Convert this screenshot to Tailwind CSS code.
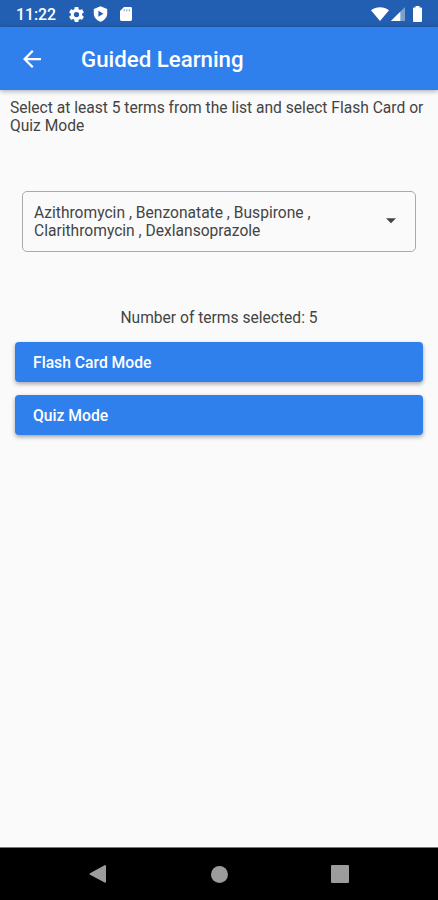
<!DOCTYPE html>
<html lang="en">
<head>
<meta charset="utf-8">
<title>Guided Learning</title>
<script src="https://cdn.jsdelivr.net/npm/@tailwindcss/browser@4"></script>
</head>
<body class="bg-[#fafafa] font-['Roboto',sans-serif] text-[#444]">
<div class="flex h-[900px] w-[438px] flex-col overflow-hidden">
  <div class="flex h-[27px] shrink-0 items-center bg-[#225fb2] pl-4 text-white">
    <span class="w-[52px] pt-[2px] text-[15.800px] leading-none font-medium whitespace-nowrap">11:22</span>
    <svg class="mt-[1px] ml-[1px] h-[15px] w-[15px]" viewBox="2 2 20 20" fill="currentColor"><path d="M19.43 12.98c.04-.32.07-.64.07-.98s-.03-.66-.07-.98l2.11-1.65c.19-.15.24-.42.12-.64l-2-3.46c-.12-.22-.39-.3-.61-.22l-2.49 1c-.52-.4-1.08-.73-1.69-.98l-.38-2.65C14.46 2.18 14.25 2 14 2h-4c-.25 0-.46.18-.49.42l-.38 2.65c-.61.25-1.17.59-1.69.98l-2.49-1c-.23-.09-.49 0-.61.22l-2 3.46c-.13.22-.07.49.12.64l2.11 1.65c-.04.32-.07.65-.07.98s.03.66.07.98l-2.11 1.65c-.19.15-.24.42-.12.64l2 3.46c.12.22.39.3.61.22l2.49-1c.52.4 1.08.73 1.69.98l.38 2.65c.03.24.24.42.49.42h4c.25 0 .46-.18.49-.42l.38-2.65c.61-.25 1.17-.59 1.69-.98l2.49 1c.23.09.49 0 .61-.22l2-3.46c.12-.22.07-.49-.12-.64l-2.11-1.65zM12 15.5A3.5 3.5 0 1 1 12 8.500a3.500 3.500 0 0 1 0 7z"/></svg>
    <svg class="mt-[1px] ml-[9px] h-4 w-[15px]" viewBox="0 0 15 16"><path d="M7.500.2 14.200 3v4.500c0 3.800-2.800 7-6.700 8.200C3.600 14.500.8 11.300.8 7.500V3z" fill="currentColor"/><path d="M5.400 4.800v6l5-3z" fill="#225fb2"/></svg>
    <svg class="mt-[1px] ml-[12px] h-[14px] w-3" viewBox="0 0 12 14"><path d="M4 0h6.600Q12 0 12 1.400v11.200q0 1.400-1.400 1.400H1.400Q0 14 0 12.600V4z" fill="currentColor"/><path d="M4.200 2v2.500M6.800 2v2.500M9.300 2v2.500" stroke="#225fb2" stroke-opacity=".55" stroke-width="1"/></svg>
    <div class="mr-4 ml-auto flex items-center pt-[1px]">
      <svg class="h-[14px] w-[18px]" viewBox="0 0 18 14" fill="currentColor"><path d="M0 3.200C5-.9 13-.9 18 3.200L9 14z"/></svg>
      <svg class="ml-[2px] h-[14px] w-[14px]" viewBox="0 0 14 14" fill="currentColor"><path d="M14 0v14H0z" fill-opacity=".4"/><path d="M9.300 4.700V14H0z"/></svg>
      <svg class="ml-2 h-4 w-[9px]" viewBox="0 0 9 16" fill="currentColor"><path d="M2.500 0h4v1.600H8q1 0 1 1V15q0 1-1 1H1q-1 0-1-1V2.600q0-1 1-1h1.500z"/></svg>
    </div>
  </div>
  <header class="flex h-[63px] shrink-0 items-center bg-[#2f80ed] text-white shadow-[0_1px_5px_rgba(0,0,0,0.35)]">
    <svg class="ml-[23px] h-[18px] w-[18px]" viewBox="4 4 16 16" fill="currentColor"><path d="M20 11H7.830l5.590-5.590L12 4l-8 8 8 8 1.410-1.410L7.830 13H20v-2z"/></svg>
    <h1 class="ml-10 text-[22.250px] leading-7 font-medium whitespace-nowrap">Guided Learning</h1>
  </header>
  <main class="flex min-h-0 flex-1 flex-col">
    <p class="mt-[9px] ml-[10px] text-[15.600px] leading-[18px] whitespace-nowrap">Select at least 5 terms from the list and select Flash Card or<br>Quiz Mode</p>
    <div class="mt-[56px] ml-[22px] flex h-[61px] w-[394px] shrink-0 items-center rounded-[5px] border border-[#aaa] pl-[11px]">
      <p class="text-[15.600px] leading-[18px] whitespace-nowrap">Azithromycin , Benzonatate , Buspirone ,<br>Clarithromycin , Dexlansoprazole</p>
      <svg class="mr-[19px] mb-[1px] ml-auto h-[6px] w-[10px]" viewBox="0 0 11 6"><path d="M0 0h11L5.500 5.500z" fill="#444"/></svg>
    </div>
    <p class="mt-[57px] text-center text-[15.600px] leading-[18px]">Number of terms selected: 5</p>
    <button class="mt-[15px] ml-[15px] flex h-10 w-[408px] shrink-0 items-center rounded-[4px] bg-[#2f80ed] pt-[2px] pl-[18px] text-[15.700px] font-medium text-white shadow-[0_2px_4px_rgba(0,0,0,0.35)]"><span>Flash Card Mode</span></button>
    <button class="mt-[13px] ml-[15px] flex h-10 w-[408px] shrink-0 items-center rounded-[4px] bg-[#2f80ed] pt-[2px] pl-[18px] text-[15.700px] font-medium text-white shadow-[0_2px_4px_rgba(0,0,0,0.35)]"><span>Quiz Mode</span></button>
  </main>
  <nav class="flex h-[53px] shrink-0 items-center border-t border-[#777] bg-black pl-[89px] text-[#9c9c9c]">
    <svg class="h-[18px] w-[17px]" viewBox="0 0 17 18" fill="currentColor"><path d="M16 0q1 0 1 1v16q0 1-1 .8L1 9.800Q0 9 1 8.200z"/></svg>
    <div class="ml-[105px] h-[17px] w-[17px] rounded-full bg-[#9c9c9c]"></div>
    <div class="ml-[103px] h-[18px] w-[18px] rounded-[1px] bg-[#9c9c9c]"></div>
  </nav>
</div>
</body>
</html>
